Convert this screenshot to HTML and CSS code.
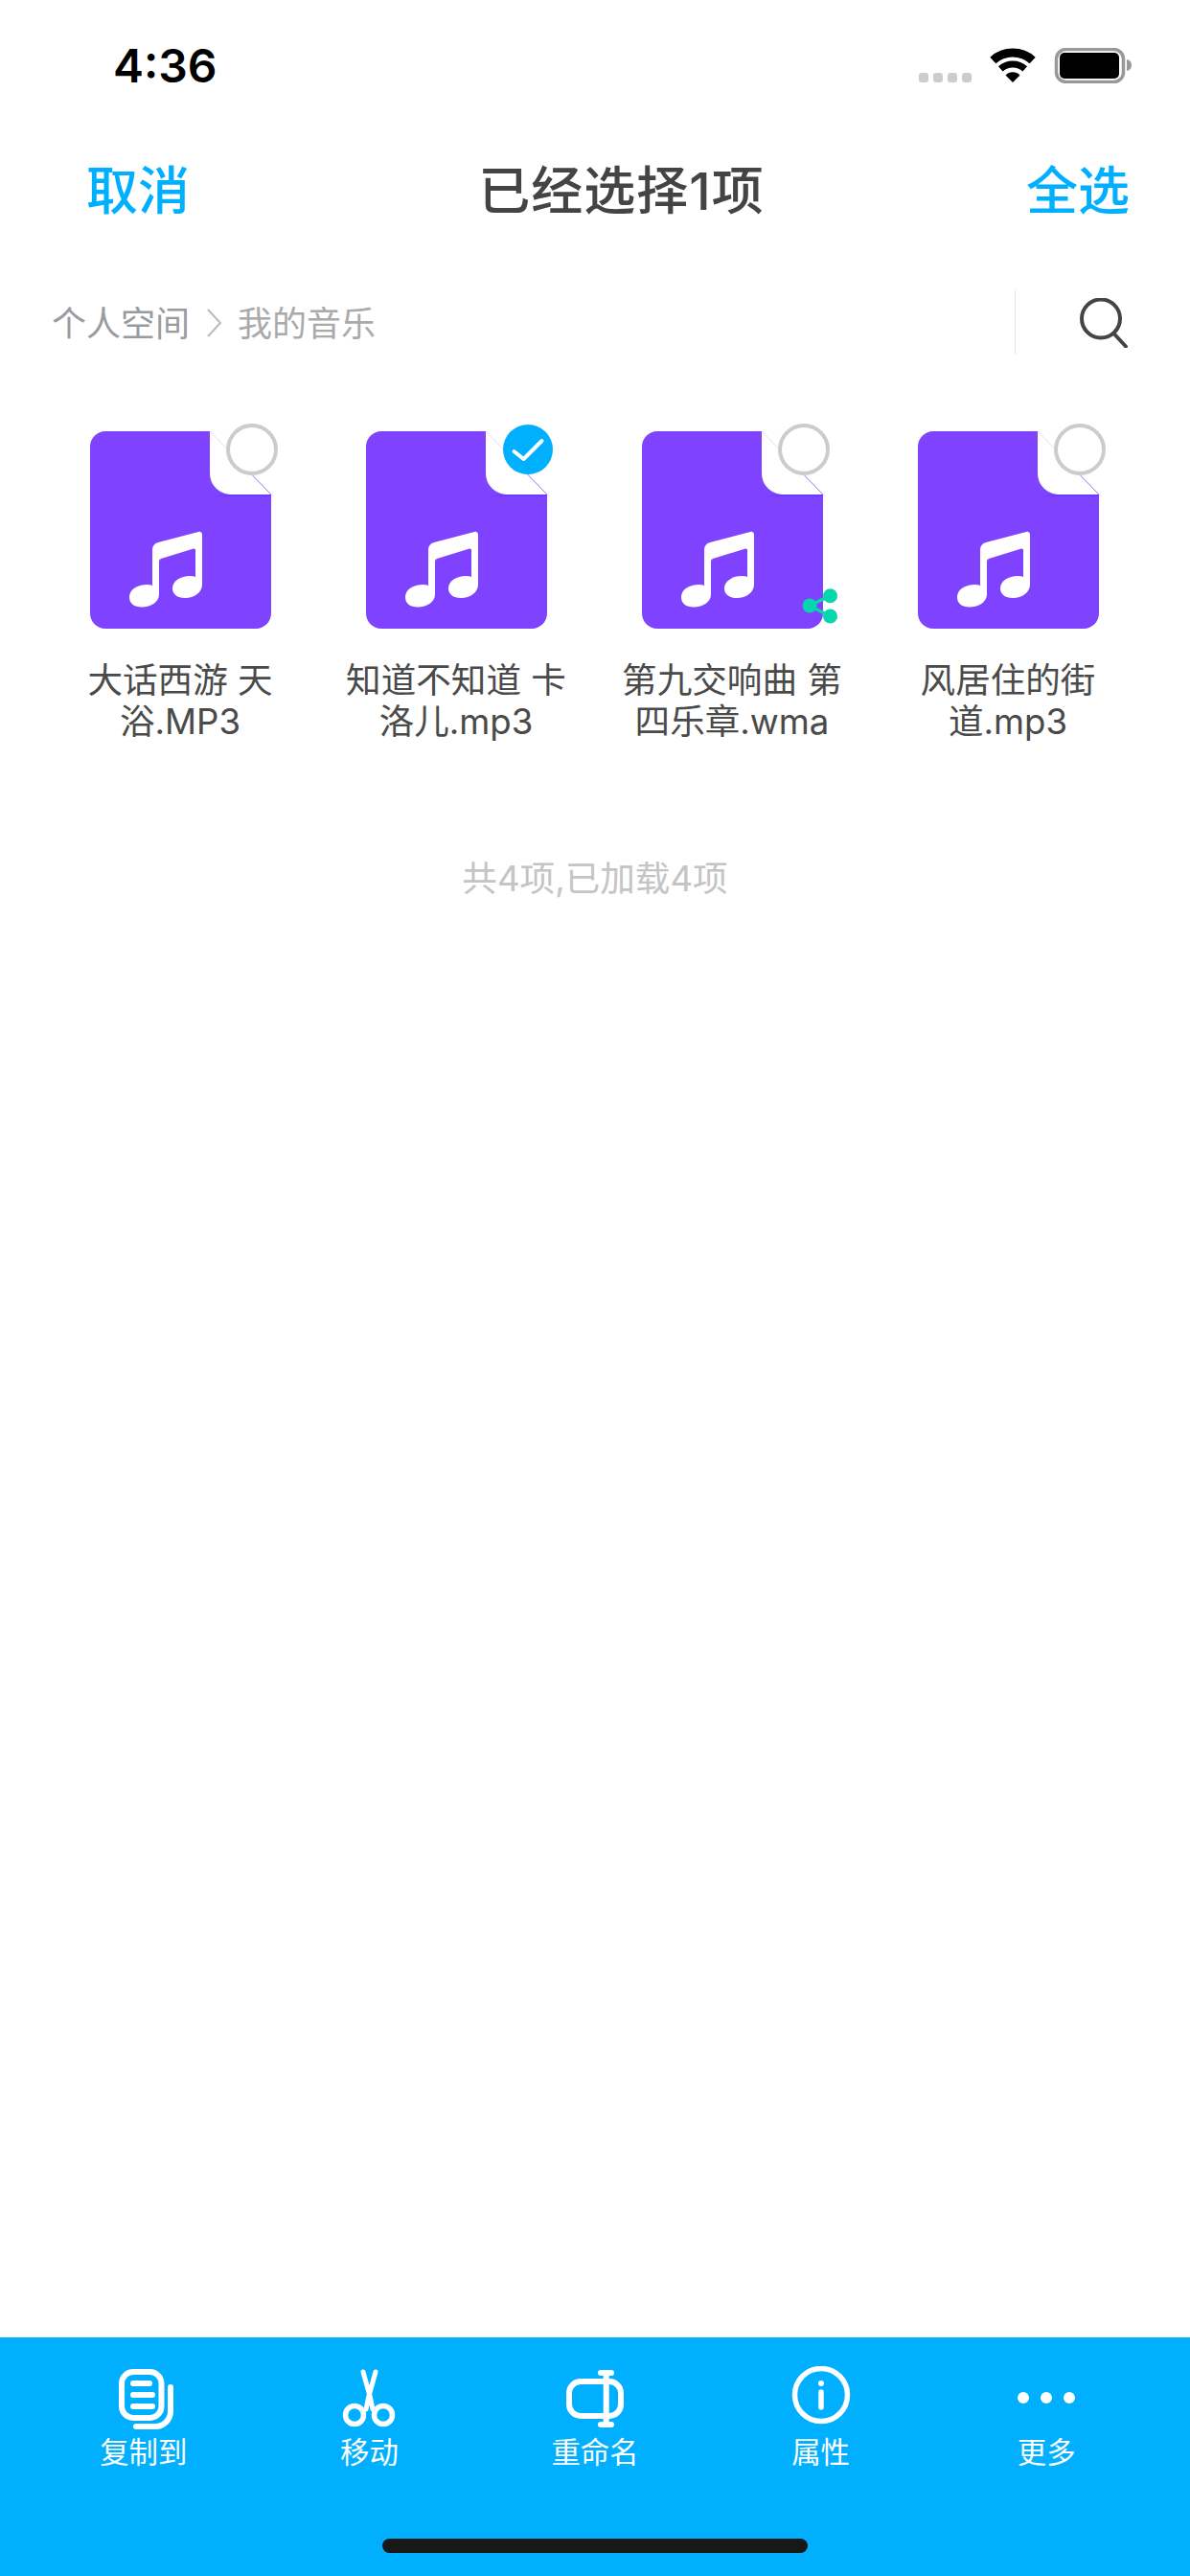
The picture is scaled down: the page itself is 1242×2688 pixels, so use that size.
FILE: index.html
```html
<!DOCTYPE html>
<html lang="zh-CN">
<head>
    <title>已经选择1项</title>
    <link rel="stylesheet" href="styles.css">
</head>
<body>
    <div class="page">
        <div class="status">
            <span class="time">4:36</span>
            <svg class="status-icons" width="222" height="37" viewBox="0 0 222 37">
                <g fill="#ccc">
                    <rect x="0" y="26" width="10" height="10" rx="3"/>
                    <rect x="15" y="26" width="10" height="10" rx="3"/>
                    <rect x="30" y="26" width="10" height="10" rx="3"/>
                    <rect x="45" y="26" width="10" height="10" rx="3"/>
                </g>
                <g fill="none" stroke="#000">
                    <path d="M77.3 13A31 31 0 0 1 118.7 13" stroke-width="9"/>
                    <path d="M85.3 21.9A19 19 0 0 1 110.7 21.9" stroke-width="7"/>
                </g>
                <path d="M98 36L90.5 28.5A10.500 10.500 0 0 1 105.500 28.500Z"/>
                <rect x="143.500" y="1.500" width="70" height="34" rx="10" fill="none" stroke="#999" stroke-width="3.500"/>
                <rect x="147" y="5" width="62" height="27" rx="5"/>
                <path d="M217 12q5 1 5 6t-5 6z" fill="#999"/>
            </svg>
        </div>

        <div class="nav">
            <span class="nav-link">取消</span>
            <span class="nav-title">已经选择1项</span>
            <span class="nav-link">全选</span>
        </div>

        <div class="crumbs">
            <span class="crumb">个人空间</span>
            <svg class="crumb-arrow" width="17" height="30" viewBox="0 0 17 30">
                <path d="M2 1L15 15L2 29" fill="none" stroke="#bbb" stroke-width="2"/>
            </svg>
            <span class="crumb crumb-current">我的音乐</span>
            <span class="crumb-divider"></span>
            <svg class="search-icon" width="50" height="52" viewBox="0 0 50 52">
                <circle cx="22" cy="21.500" r="20" fill="none" stroke="#444" stroke-width="4"/>
                <path d="M35.500 37L48 50.500" fill="none" stroke="#444" stroke-width="4" stroke-linecap="round"/>
            </svg>
        </div>

        <div class="files">
            <div class="file">
                <div class="file-thumb">
                    <svg width="189" height="206" viewBox="0 0 189 206">
                        <use href="#music-file"/>
                    </svg>
                    <span class="check"></span>
                </div>
                <div class="file-name">大话西游 天浴.MP3</div>
            </div>
            <div class="file">
                <div class="file-thumb">
                    <svg width="189" height="206" viewBox="0 0 189 206">
                        <use href="#music-file"/>
                    </svg>
                    <svg class="check-on" width="52" height="52" viewBox="0 0 52 52">
                        <circle cx="26" cy="26" r="26" fill="#00b0ff"/>
                        <path d="M11.500 28L21.500 36L40.500 17" fill="none" stroke="#fff" stroke-width="4" stroke-linecap="round" stroke-linejoin="round"/>
                    </svg>
                </div>
                <div class="file-name">知道不知道 卡洛儿.mp3</div>
            </div>
            <div class="file">
                <div class="file-thumb">
                    <svg width="189" height="206" viewBox="0 0 189 206">
                        <use href="#music-file"/>
                    </svg>
                    <span class="check"></span>
                    <svg class="share-badge" width="42" height="42" viewBox="0 0 42 42">
                        <path d="M31.500 11.700L10 22L31.500 33" fill="none" stroke="#05d6ae" stroke-width="3.500"/>
                        <g fill="#05d6ae">
                            <circle cx="10" cy="22" r="7.500"/>
                            <circle cx="31.500" cy="11.700" r="7.500"/>
                            <circle cx="31.500" cy="33" r="7.500"/>
                        </g>
                    </svg>
                </div>
                <div class="file-name">第九交响曲 第四乐章.wma</div>
            </div>
            <div class="file">
                <div class="file-thumb">
                    <svg width="189" height="206" viewBox="0 0 189 206">
                        <use href="#music-file"/>
                    </svg>
                    <span class="check"></span>
                </div>
                <div class="file-name">风居住的街道.mp3</div>
            </div>
        </div>

        <div class="count">共4项,已加载4项</div>

        <div class="toolbar">
            <div class="tools">
                <div class="tool">
                    <svg width="64" height="66" viewBox="0 0 64 66" fill="none" stroke="#fff" stroke-width="6" stroke-linecap="round">
                        <g transform="translate(6 3)">
                            <rect x="3" y="3" width="41.500" height="48" rx="12"/>
                            <path d="M15 15H32M15 27H35M15 39H35"/>
                            <path d="M54 19V44A16 16 0 0 1 38 60H18"/>
                        </g>
                    </svg>
                    <span class="tool-label">复制到</span>
                </div>
                <div class="tool">
                    <svg width="64" height="66" viewBox="0 0 64 66" fill="none" stroke="#fff" stroke-linecap="round">
                        <g transform="translate(5 3)">
                            <path d="M21 3L28.500 30L31 42M34 3L26.500 30L24 42" stroke-width="5"/>
                            <circle cx="12" cy="48" r="9.500" stroke-width="5.500"/>
                            <circle cx="42" cy="48" r="9.500" stroke-width="5.500"/>
                        </g>
                    </svg>
                    <span class="tool-label">移动</span>
                </div>
                <div class="tool">
                    <svg width="64" height="66" viewBox="0 0 64 66" fill="none" stroke="#fff" stroke-width="6" stroke-linecap="round">
                        <g transform="translate(2 4)">
                            <rect x="3" y="12" width="54" height="36" rx="12"/>
                            <path d="M36 3H47M36 57H47M41.700 3V57"/>
                        </g>
                    </svg>
                    <span class="tool-label">重命名</span>
                </div>
                <div class="tool">
                    <svg width="64" height="66" viewBox="0 0 64 66" fill="none" stroke="#fff" stroke-linecap="round">
                        <g transform="translate(2 0)">
                            <circle cx="30" cy="30" r="27.500" stroke-width="5.500"/>
                            <circle cx="30" cy="18" r="3" fill="#fff" stroke="none"/>
                            <path d="M30 27V43" stroke-width="5.500"/>
                        </g>
                    </svg>
                    <span class="tool-label">属性</span>
                </div>
                <div class="tool">
                    <svg width="64" height="66" viewBox="0 0 64 66" fill="#fff">
                        <g transform="translate(2 27)">
                            <circle cx="6" cy="6" r="6"/>
                            <circle cx="30" cy="6" r="6"/>
                            <circle cx="54" cy="6" r="6"/>
                        </g>
                    </svg>
                    <span class="tool-label">更多</span>
                </div>
            </div>
            <div class="home-bar"></div>
        </div>
    </div>

    <svg class="defs" width="0" height="0">
        <defs>
            <g id="music-file">
                <path d="M16 0H125V44A22 22 0 0 0 147 66H189V190A16 16 0 0 1 173 206H16A16 16 0 0 1 0 190V16A16 16 0 0 1 16 0Z" fill="#7f43ff"/>
                <path d="M147 66H189V68H125Q136 66 147 66Z" fill="#6a3cff"/>
                <path d="M125 0L157 33" stroke="#e6dcff" stroke-width="1"/>
                <path d="M157 33L189 66" stroke="#9a6cff" stroke-width="1"/>
                <path d="M113 105Q117 104 117 109V160C117 168 109 174 99 174C91 174 86 170 86 164C86 156 95 151 104 151Q108 151 110 152V124Q110 122 108 122.500L74 133Q72 133.600 72 136V170C72 178 64 183.500 54 183.500C46 183.500 41 179.500 41 173C41 165 50 160 59 160Q63 160 65 161V124C65 120 67 117 71 116Z" fill="#fff"/>
            </g>
        </defs>
    </svg>
</body>
</html>
```

FILE: styles.css
```css
* {
    box-sizing: border-box;
}
body {
    margin: 0;
    background-color: #fff;
    font-family: Inter, "Noto Sans CJK SC", sans-serif;
}
.page {
    display: flex;
    flex-direction: column;
    height: 2688px;
}
.defs {
    position: absolute;
}

.status {
    display: flex;
    justify-content: space-between;
    align-items: center;
    height: 136px;
    padding: 0 61px 0 118px;
}
.time {
    font-size: 48px;
    font-weight: 600;
    color: #000;
}

.nav {
    display: flex;
    align-items: center;
    height: 124px;
    padding: 0 63px 5px 90px;
}
.nav-link {
    font-size: 54px;
    font-weight: 500;
    color: #00b0ff;
}
.nav-title {
    flex: 1;
    padding-left: 28px;
    text-align: center;
    font-size: 54px;
    font-weight: 500;
    letter-spacing: 1px;
    color: #444;
}

.crumbs {
    display: flex;
    align-items: center;
    height: 67px;
    margin-top: 43px;
    padding: 0 65px 0 54px;
}
.crumb {
    margin-bottom: 3px;
    font-size: 36px;
    color: #999ba0;
}
.crumb-current {
    color: #aaa;
}
.crumb-arrow {
    margin: 0 16px 0 17px;
}
.crumb-divider {
    align-self: stretch;
    width: 1px;
    margin-left: auto;
    background-color: #e4e4e4;
}
.search-icon {
    margin-left: 67px;
}

.files {
    display: grid;
    grid-template-columns: repeat(4, 288px);
    margin-top: 80px;
    padding: 0 46px 0 44px;
}
.file {
    display: flex;
    flex-direction: column;
    align-items: center;
}
.file-thumb {
    position: relative;
    width: 189px;
    height: 206px;
}
.file-thumb svg {
    display: block;
}
.check {
    position: absolute;
    top: -8px;
    left: 142px;
    width: 54px;
    height: 54px;
    border: 4px solid #ccc;
    border-radius: 50%;
    background-color: #fff;
}
.file-thumb .check-on {
    position: absolute;
    top: -7px;
    left: 143px;
}
.file-thumb .share-badge {
    position: absolute;
    top: 160px;
    left: 165px;
}
.file-name {
    width: 240px;
    margin-top: 33px;
    text-align: center;
    font-size: 36.6px;
    line-height: 43px;
    color: #4a4a4a;
}

.count {
    margin-top: 120px;
    text-align: center;
    font-size: 36.6px;
    line-height: 44px;
    color: #c4c4c4;
}

.toolbar {
    display: flex;
    flex-direction: column;
    align-items: center;
    height: 249px;
    margin-top: auto;
    padding-top: 30px;
    background-color: #00b0ff;
}
.tools {
    display: grid;
    grid-template-columns: repeat(5, 1fr);
    width: 100%;
    padding: 0 32px;
}
.tool {
    display: flex;
    flex-direction: column;
    align-items: center;
    gap: 6px;
}
.tool svg {
    display: block;
}
.tool-label {
    font-size: 30.4px;
    line-height: 36px;
    color: #fff;
}
.home-bar {
    width: 444px;
    height: 15px;
    margin-top: 72px;
    border-radius: 8px;
    background-color: #181818;
}
```
